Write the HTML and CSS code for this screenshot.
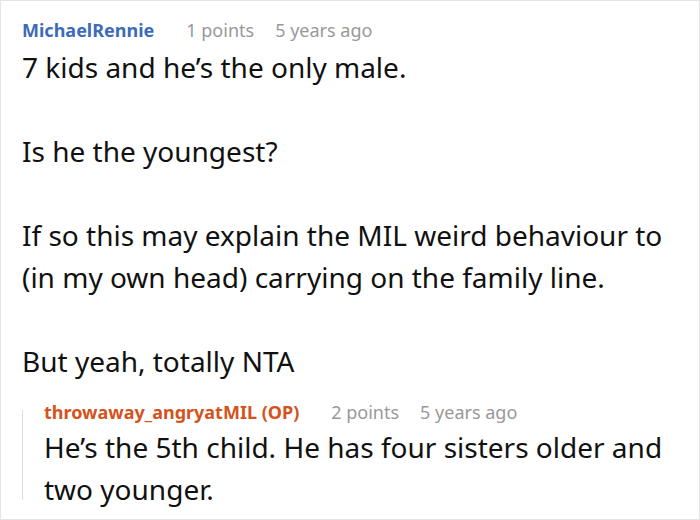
FILE: index.html
```html
<!DOCTYPE html>
<html>
<head>
<meta charset="utf-8">
<link rel="stylesheet" href="styles.css">
</head>
<body>
<div class="frame">
  <div class="comment">
    <div class="meta">
      <span class="user user-blue">MichaelRennie</span>
      <span class="info">1 points</span>
      <span class="info">5 years ago</span>
    </div>
    <div class="body">
      <p>7 kids and he’s the only male.</p>
      <p>Is he the youngest?</p>
      <p>If so this may explain the MIL weird behaviour to (in my own head) carrying on the family line.</p>
      <p>But yeah, totally NTA</p>
    </div>
    <div class="reply">
      <div class="meta">
        <span class="user user-orange">throwaway_angryatMIL (OP)</span>
        <span class="info">2 points</span>
        <span class="info">5 years ago</span>
      </div>
      <div class="body">
        <p>He’s the 5th child. He has four sisters older and two younger.</p>
      </div>
    </div>
  </div>
</div>
</body>
</html>
```
FILE: styles.css
```css
html, body {
  margin: 0;
  padding: 0;
  background: #fff;
}
.frame {
  box-sizing: border-box;
  width: 700px;
  height: 520px;
  border: 1px solid #e4e4e4;
  overflow: hidden;
  font-family: "Noto Sans", "Open Sans", sans-serif;
  color: #111;
}
.comment {
  padding: 15px 14px 0 21px;
}
.meta {
  display: flex;
  align-items: baseline;
  height: 28px;
  line-height: 28px;
  margin-bottom: 2px;
}
.user {
  font-size: 18px;
  font-weight: 700;
  margin-right: 32px;
}
.user-blue { color: #3d6bb7; }
.user-orange { color: #d4531c; }
.info {
  font-size: 18px;
  color: #999;
  margin-right: 21px;
}
.body p {
  margin: 0 0 42px 0;
  font-size: 28px;
  line-height: 42px;
}
.body p:last-child {
  margin-bottom: 0;
}
.reply {
  position: relative;
  margin-top: 16px;
  padding-left: 22px;
}
.reply .meta {
  margin-bottom: 0;
}
.reply::before {
  content: "";
  position: absolute;
  left: 0;
  top: 12px;
  bottom: 10px;
  width: 1px;
  background: #dcdcdc;
}
```
